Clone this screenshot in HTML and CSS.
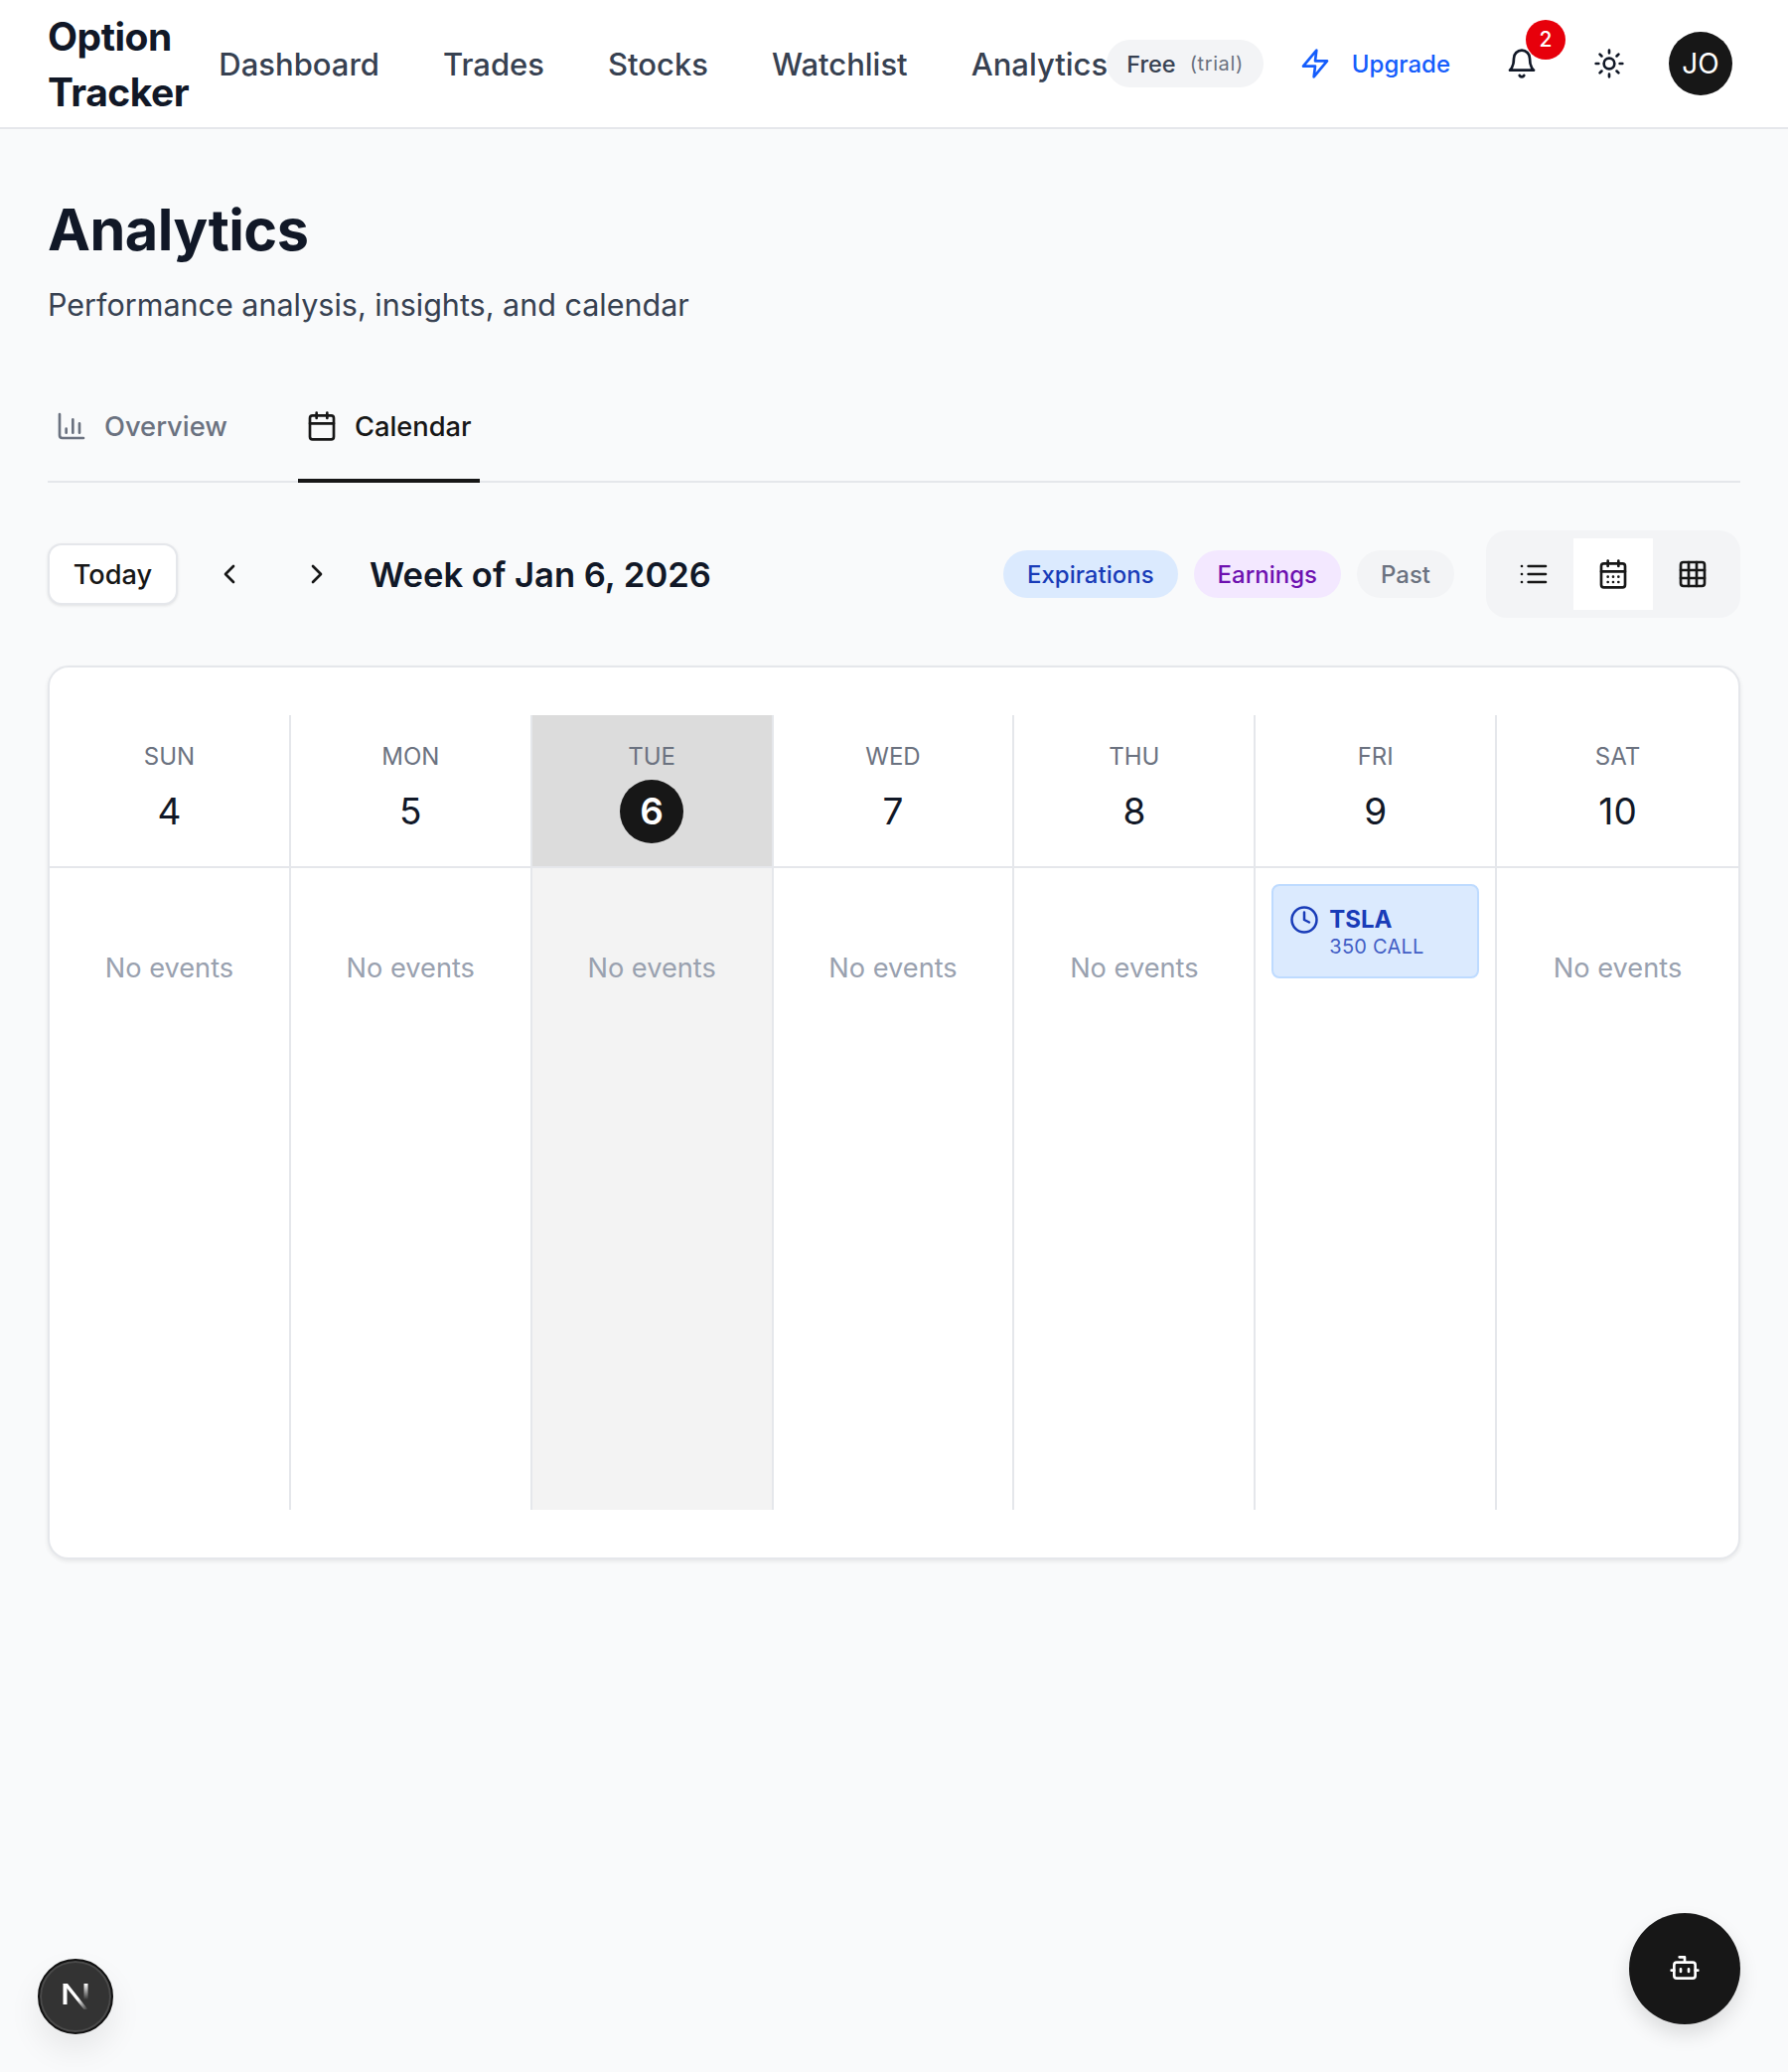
FILE: index.html
```html
<!DOCTYPE html>
<html lang="en">

<head>
    <meta charset="UTF-8">
    <title>Option Tracker - Analytics</title>
    <link rel="stylesheet" href="styles.css">
</head>

<body>
    <header class="topbar">
        <div class="logo">Option Tracker</div>
        <nav class="main-nav">
            <a>Dashboard</a>
            <a>Trades</a>
            <a>Stocks</a>
            <a>Watchlist</a>
            <a>Analytics</a>
        </nav>
        <div class="topbar-right">
            <div class="plan-pill"><span>Free</span><small>(trial)</small></div>
            <a class="upgrade">
                <svg class="icon" viewBox="0 0 24 24"><polygon points="13 2 3 14 12 14 11 22 21 10 12 10 13 2" /></svg>
                Upgrade
            </a>
            <div class="bell">
                <svg class="icon" viewBox="0 0 24 24"><path d="M6 8a6 6 0 0 1 12 0c0 7 3 9 3 9H3s3-2 3-9" /><path d="M10.3 21a1.94 1.94 0 0 0 3.4 0" /></svg>
                <span class="badge">2</span>
            </div>
            <svg class="icon sun" viewBox="0 0 24 24"><circle cx="12" cy="12" r="4" /><path d="M12 2v2M12 20v2M4.93 4.93l1.41 1.41M17.66 17.66l1.41 1.41M2 12h2M20 12h2M6.34 17.66l-1.41 1.41M19.07 4.93l-1.41 1.41" /></svg>
            <div class="avatar">JO</div>
        </div>
    </header>

    <main class="page">
        <h1>Analytics</h1>
        <p class="subtitle">Performance analysis, insights, and calendar</p>

        <div class="tabs">
            <a class="tab">
                <svg class="icon" viewBox="0 0 24 24"><path d="M3 3v16a2 2 0 0 0 2 2h16" /><path d="M8 17v-3M13 17V7M18 17v-7" /></svg>
                Overview
            </a>
            <a class="tab active">
                <svg class="icon" viewBox="0 0 24 24"><rect x="3" y="4" width="18" height="18" rx="2" /><path d="M16 2v4M8 2v4M3 10h18" /></svg>
                Calendar
            </a>
        </div>

        <div class="toolbar">
            <button class="today-btn">Today</button>
            <button class="arrow-btn"><svg class="icon" viewBox="0 0 24 24"><path d="M15 18l-6-6 6-6" /></svg></button>
            <button class="arrow-btn"><svg class="icon" viewBox="0 0 24 24"><path d="M9 18l6-6-6-6" /></svg></button>
            <h2>Week of Jan 6, 2026</h2>
            <div class="legend">
                <span class="tag tag-blue">Expirations</span>
                <span class="tag tag-purple">Earnings</span>
                <span class="tag tag-gray">Past</span>
            </div>
            <div class="view-switch">
                <button><svg class="icon" viewBox="0 0 24 24"><path d="M8 6h13M8 12h13M8 18h13M3 6h.01M3 12h.01M3 18h.01" /></svg></button>
                <button class="active"><svg class="icon" viewBox="0 0 24 24"><rect x="3" y="4" width="18" height="18" rx="2" /><path d="M16 2v4M8 2v4M3 10h18M8 14h.01M12 14h.01M16 14h.01M8 18h.01M12 18h.01M16 18h.01" /></svg></button>
                <button><svg class="icon" viewBox="0 0 24 24"><rect x="3" y="3" width="18" height="18" rx="2" /><path d="M3 9h18M3 15h18M9 3v18M15 3v18" /></svg></button>
            </div>
        </div>

        <section class="calendar">
            <div class="week">
                <div class="day">
                    <div class="day-head"><span class="dow">SUN</span><span class="num">4</span></div>
                    <div class="day-body"><p class="empty">No events</p></div>
                </div>
                <div class="day">
                    <div class="day-head"><span class="dow">MON</span><span class="num">5</span></div>
                    <div class="day-body"><p class="empty">No events</p></div>
                </div>
                <div class="day today">
                    <div class="day-head"><span class="dow">TUE</span><span class="num">6</span></div>
                    <div class="day-body"><p class="empty">No events</p></div>
                </div>
                <div class="day">
                    <div class="day-head"><span class="dow">WED</span><span class="num">7</span></div>
                    <div class="day-body"><p class="empty">No events</p></div>
                </div>
                <div class="day">
                    <div class="day-head"><span class="dow">THU</span><span class="num">8</span></div>
                    <div class="day-body"><p class="empty">No events</p></div>
                </div>
                <div class="day">
                    <div class="day-head"><span class="dow">FRI</span><span class="num">9</span></div>
                    <div class="day-body">
                        <div class="event">
                            <svg class="icon" viewBox="0 0 24 24"><circle cx="12" cy="12" r="10" /><path d="M12 6v6l4 2" /></svg>
                            <div>
                                <div class="event-name">TSLA</div>
                                <div class="event-sub">350 CALL</div>
                            </div>
                        </div>
                    </div>
                </div>
                <div class="day">
                    <div class="day-head"><span class="dow">SAT</span><span class="num">10</span></div>
                    <div class="day-body"><p class="empty">No events</p></div>
                </div>
            </div>
        </section>
    </main>

    <div class="dev-badge">
        <svg viewBox="0 0 32 32" width="32" height="32">
            <defs>
                <linearGradient id="nFade" x1="0" y1="0" x2="1" y2="1">
                    <stop offset="0.6" stop-color="#fff" />
                    <stop offset="1" stop-color="#fff" stop-opacity="0" />
                </linearGradient>
                <linearGradient id="nFade2" x1="0" y1="0" x2="0" y2="1">
                    <stop offset="0" stop-color="#fff" />
                    <stop offset="0.9" stop-color="#fff" stop-opacity="0" />
                </linearGradient>
            </defs>
            <rect x="3.500" y="3" width="4" height="21" fill="#fff" />
            <polygon points="3.500,3 8,3 28.500,29 24.500,29" fill="url(#nFade)" />
            <rect x="24.500" y="3" width="4" height="18" fill="url(#nFade2)" />
        </svg>
    </div>

    <button class="bot-btn">
        <svg class="icon" viewBox="0 0 24 24"><path d="M12 8V4H8" /><rect x="4" y="8" width="16" height="12" rx="2" /><path d="M2 14h2M20 14h2M15 13v2M9 13v2" /></svg>
    </button>
</body>

</html>
```

FILE: styles.css
```css
* {
    box-sizing: border-box;
}

body {
    margin: 0;
    min-height: 2086px;
    font-family: Inter, "Noto Sans", sans-serif;
    background-color: #f9fafb;
    color: #111827;
}

.icon {
    width: 32px;
    height: 32px;
    flex: none;
    fill: none;
    stroke: currentColor;
    stroke-width: 2;
    stroke-linecap: round;
    stroke-linejoin: round;
}

/* top bar */
.topbar {
    display: flex;
    align-items: center;
    height: 130px;
    padding: 2px 56px 0 48px;
    background-color: #fff;
    border-bottom: 2px solid #e5e7eb;
}

.logo {
    width: 176px;
    font-size: 39px;
    line-height: 56px;
    font-weight: 700;
    letter-spacing: -0.5px;
}

.main-nav {
    display: flex;
    gap: 64px;
    margin-top: -2px;
}

.main-nav a {
    font-size: 31px;
    font-weight: 500;
    color: #374151;
    white-space: nowrap;
}

.topbar-right {
    display: flex;
    align-items: center;
    margin-top: -2px;
    margin-left: -1px;
}

.plan-pill {
    display: flex;
    align-items: center;
    gap: 14px;
    height: 48px;
    padding: 0 20px;
    border-radius: 24px;
    background-color: #f3f4f6;
    color: #374151;
    font-size: 23.5px;
    font-weight: 500;
}

.plan-pill small {
    font-size: 20px;
    font-weight: 400;
    letter-spacing: 0.6px;
    color: #6b7280;
}

.upgrade {
    display: flex;
    align-items: center;
    gap: 21px;
    margin-left: 36px;
    font-size: 24px;
    font-weight: 500;
    color: #155dfc;
}

.bell {
    position: relative;
    display: flex;
    margin-left: 56px;
}

.badge {
    position: absolute;
    top: -28px;
    left: 20px;
    width: 40px;
    height: 40px;
    border-radius: 50%;
    background-color: #e7000b;
    color: #fff;
    font-size: 21px;
    font-weight: 500;
    line-height: 40px;
    text-align: center;
}

.sun {
    margin-left: 56px;
}

.avatar {
    width: 64px;
    height: 64px;
    margin-left: 44px;
    border-radius: 50%;
    background-color: #171717;
    color: #fff;
    font-size: 28px;
    line-height: 64px;
    text-align: center;
}

/* page */
.page {
    padding: 69px 48px 0;
}

h1 {
    margin: 0;
    font-size: 57.6px;
    line-height: 64px;
    font-weight: 700;
    letter-spacing: -0.5px;
}

.subtitle {
    margin: 20px 0 0;
    font-size: 30.5px;
    line-height: 48px;
    color: #374151;
}

.tabs {
    display: flex;
    gap: 63px;
    margin-top: 43px;
    border-bottom: 2px solid #e5e7eb;
}

.tab {
    display: flex;
    align-items: center;
    gap: 17px;
    height: 112px;
    padding: 2px 8px 0;
    margin-bottom: -2px;
    font-size: 27.3px;
    font-weight: 500;
    color: #6b7280;
    border-bottom: 4px solid transparent;
}

.tab.active {
    color: #171717;
    border-bottom-color: #171717;
}

/* toolbar */
.toolbar {
    display: flex;
    align-items: center;
    height: 88px;
    margin-top: 48px;
}

.toolbar button {
    border: none;
    background: none;
    font-family: inherit;
    color: #171717;
    padding: 0;
}

.toolbar .today-btn {
    width: 131px;
    height: 62px;
    border: 2px solid #e5e7eb;
    border-radius: 14px;
    background-color: #fff;
    font-size: 27.2px;
    font-weight: 500;
    box-shadow: 0 1px 3px rgba(0, 0, 0, 0.1);
}

.arrow-btn {
    display: flex;
    justify-content: center;
    width: 56px;
    margin-right: 32px;
}

.today-btn + .arrow-btn {
    margin-left: 24px;
}

.arrow-btn + .arrow-btn {
    margin-right: 25px;
}

h2 {
    margin: 0;
    font-size: 34.6px;
    font-weight: 600;
}

.legend {
    display: flex;
    gap: 16px;
    margin-left: auto;
    margin-right: 32px;
}

.tag {
    height: 48px;
    padding: 0 24px;
    border-radius: 24px;
    font-size: 24px;
    font-weight: 500;
    line-height: 50px;
}

.tag-blue {
    background-color: #dbeafe;
    color: #193cb8;
}

.tag-purple {
    background-color: #f3e8ff;
    color: #6e11b0;
}

.tag-gray {
    background-color: #f3f4f6;
    color: #6b7280;
}

.view-switch {
    display: flex;
    padding: 8px;
    border-radius: 21px;
    background-color: #f3f4f6;
}

.view-switch button {
    display: flex;
    align-items: center;
    justify-content: center;
    width: 80px;
    height: 72px;
}

.view-switch button.active {
    background-color: #fff;
}

/* calendar */
.calendar {
    height: 900px;
    margin-top: 48px;
    padding: 48px 0;
    background-color: #fff;
    border: 2px solid #e5e7eb;
    border-radius: 21px;
    box-shadow: 0 2px 4px rgba(0, 0, 0, 0.08);
}

.week {
    display: grid;
    grid-template-columns: repeat(7, 1fr);
    height: 800px;
}

.day {
    display: flex;
    flex-direction: column;
    border-right: 2px solid #e5e7eb;
}

.day:last-child {
    border-right: none;
}

.day-head {
    display: flex;
    flex-direction: column;
    align-items: center;
    height: 154px;
    padding-top: 26px;
    border-bottom: 2px solid #e5e7eb;
}

.dow {
    font-size: 24px;
    line-height: 32px;
    color: #6b7280;
}

.num {
    width: 64px;
    height: 64px;
    margin-top: 7px;
    border-radius: 50%;
    font-size: 37px;
    line-height: 64px;
    text-align: center;
}

.day-body {
    flex: 1;
    padding: 16px;
}

.today .day-head {
    background-color: #dcdcdc;
}

.today .day-body {
    background-color: #f3f3f3;
}

.today .num {
    background-color: #171717;
    color: #fff;
    font-weight: 600;
}

.empty {
    margin: 0;
    padding-top: 65px;
    font-size: 27.2px;
    line-height: 40px;
    text-align: center;
    color: #99a1af;
}

.event {
    display: flex;
    gap: 10px;
    height: 95px;
    padding: 19px 16px;
    background-color: #dbeafe;
    border: 2px solid #bedbff;
    border-radius: 8px;
    color: #193cb8;
}

.event .icon {
    width: 30px;
    height: 30px;
}

.event-name {
    font-size: 24px;
    line-height: 30px;
    font-weight: 700;
}

.event-sub {
    font-size: 20px;
    line-height: 25px;
    letter-spacing: 0.25px;
    opacity: 0.8;
}

/* floating things */
.dev-badge {
    position: fixed;
    left: 38px;
    top: 1972px;
    display: flex;
    align-items: center;
    justify-content: center;
    width: 76px;
    height: 76px;
    border-radius: 50%;
    background-color: #333;
    border: 2px solid #111;
    box-shadow: inset 0 0 0 2px #4a4a4a, 0 16px 32px rgba(0, 0, 0, 0.08);
}

.bot-btn {
    position: fixed;
    left: 1640px;
    top: 1926px;
    width: 112px;
    height: 112px;
    border: none;
    border-radius: 50%;
    background-color: #171717;
    color: #fff;
    box-shadow: 0 10px 20px rgba(0, 0, 0, 0.12);
}
```
